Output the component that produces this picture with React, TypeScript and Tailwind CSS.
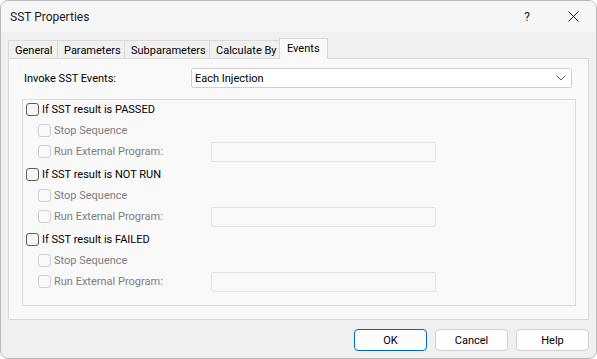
import React from "react";

const font = { fontFamily: "Roboto, 'Noto Sans', sans-serif" };

function Box({ disabled }: { disabled?: boolean }) {
  return (
    <div
      className={
        "w-[13px] h-[13px] shrink-0 rounded-[3px] border " +
        (disabled ? "border-[#cfcfcf] bg-[#f9f9f9]" : "border-[#5f5f5f] bg-[#f6f6f6]")
      }
    />
  );
}

function Section({ title }: { title: string }) {
  return (
    <div className="flex flex-col">
      <div className="h-[19px] flex items-center pl-[3px]">
        <Box />
        <span className="ml-[3px] text-[11px] text-black leading-none">{title}</span>
      </div>
      <div className="h-[22px] flex items-center pl-[15px]">
        <Box disabled />
        <span className="ml-[3px] text-[11px] text-[#7d7d7d] leading-none">Stop Sequence</span>
      </div>
      <div className="h-[21px] flex items-center pl-[15px]">
        <div className="w-[173px] flex items-center">
          <Box disabled />
          <span className="ml-[3px] text-[11px] text-[#7d7d7d] leading-none">Run External Program:</span>
        </div>
        <div className="w-[225px] h-[20px] border border-[#e3e3e3] bg-[#f9f9f9] rounded-[2px]" />
      </div>
    </div>
  );
}

export default function App() {
  const tabs = [
    { label: "General", w: "w-[49px]" },
    { label: "Parameters", w: "w-[67px]" },
    { label: "Subparameters", w: "w-[85px]" },
    { label: "Calculate By", w: "w-[70px]" },
  ];
  return (
    <div style={font} className="w-[597px] h-[359px] bg-white">
      <div className="w-[597px] h-[359px] rounded-[8px] border border-[#b9b9b9] bg-[#f0f0f0] overflow-hidden flex flex-col">
        {/* Title bar */}
        <div className="h-[31px] shrink-0 bg-[#f6f6f6] flex items-center pl-[9px] pr-[17px]">
          <span className="text-[12px] text-[#1a1a1a]">SST Properties</span>
          <div className="flex-1" />
          <span className="text-[12px] text-[#1a1a1a] mr-[38px]">?</span>
          <svg width="11" height="11" viewBox="0 0 11 11">
            <path d="M0.5 0.5 L10.5 10.5 M10.5 0.5 L0.5 10.5" stroke="#1a1a1a" strokeWidth="1" />
          </svg>
        </div>
        {/* Body */}
        <div className="flex flex-col pl-[7px] pt-[6px]">
          <div className="h-[20px] flex items-end">
            {tabs.map((t) => (
              <div
                key={t.label}
                className={
                  t.w +
                  " h-[18px] border-t border-l border-[#d9d9d9] bg-[#f0f0f0] flex items-center pl-[6px] pt-[1px] text-[11px] text-black leading-none"
                }
              >
                {t.label}
              </div>
            ))}
            <div className="w-[49px] h-[21px] -mb-[1px] relative z-10 border-t border-l border-r border-[#d9d9d9] bg-[#f9f9f9] flex items-center pl-[7px] pb-[1px] text-[11px] text-black leading-none">
              Events
            </div>
          </div>
          <div className="w-[581px] h-[262px] border border-[#d9d9d9] bg-[#f9f9f9] pt-[9px] pl-[13px] flex flex-col">
            <div className="flex items-center pl-[2px]">
              <div className="w-[167px] text-[11px] text-black leading-none">Invoke SST Events:</div>
              <div className="w-[381px] h-[20px] border border-[#d0d0d0] bg-white rounded-[2px] flex items-center pl-[3px] pr-[5px]">
                <span className="text-[11px] text-black leading-none flex-1">Each Injection</span>
                <svg width="10" height="6" viewBox="0 0 10 6">
                  <path d="M0.5 0.5 L5 5 L9.5 0.5" stroke="#606060" strokeWidth="1" fill="none" />
                </svg>
              </div>
            </div>
            <div className="mt-[11px] w-[554px] border border-[#dcdcdc] bg-[#f9f9f9] pb-[13px] flex flex-col gap-[3px]">
              <Section title="If SST result is PASSED" />
              <Section title="If SST result is NOT RUN" />
              <Section title="If SST result is FAILED" />
            </div>
          </div>
          <div className="mt-[9px] w-[581px] flex justify-end gap-[8px]">
            <div className="w-[73px] h-[22px] rounded-[4px] border border-[#0067c0] bg-[#fdfdfd] flex items-center justify-center text-[11px] text-black leading-none">
              OK
            </div>
            <div className="w-[73px] h-[22px] rounded-[4px] border border-[#d0d0d0] bg-[#fdfdfd] flex items-center justify-center text-[11px] text-black leading-none">
              Cancel
            </div>
            <div className="w-[73px] h-[22px] rounded-[4px] border border-[#d0d0d0] bg-[#fdfdfd] flex items-center justify-center text-[11px] text-black leading-none">
              Help
            </div>
          </div>
        </div>
      </div>
    </div>
  );
}
